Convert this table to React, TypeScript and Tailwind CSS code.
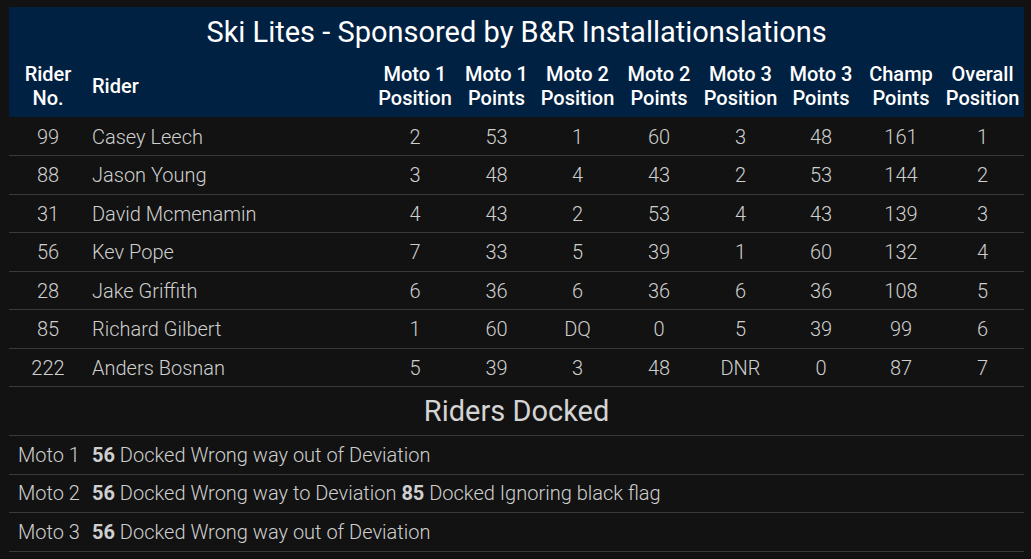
import React from 'react';

type Row = {
  no: string;
  name: string;
  m1p: string;
  m1pts: string;
  m2p: string;
  m2pts: string;
  m3p: string;
  m3pts: string;
  champ: string;
  overall: string;
};

const rows: Row[] = [
  { no: '99', name: 'Casey Leech', m1p: '2', m1pts: '53', m2p: '1', m2pts: '60', m3p: '3', m3pts: '48', champ: '161', overall: '1' },
  { no: '88', name: 'Jason Young', m1p: '3', m1pts: '48', m2p: '4', m2pts: '43', m3p: '2', m3pts: '53', champ: '144', overall: '2' },
  { no: '31', name: 'David Mcmenamin', m1p: '4', m1pts: '43', m2p: '2', m2pts: '53', m3p: '4', m3pts: '43', champ: '139', overall: '3' },
  { no: '56', name: 'Kev Pope', m1p: '7', m1pts: '33', m2p: '5', m2pts: '39', m3p: '1', m3pts: '60', champ: '132', overall: '4' },
  { no: '28', name: 'Jake Griffith', m1p: '6', m1pts: '36', m2p: '6', m2pts: '36', m3p: '6', m3pts: '36', champ: '108', overall: '5' },
  { no: '85', name: 'Richard Gilbert', m1p: '1', m1pts: '60', m2p: 'DQ', m2pts: '0', m3p: '5', m3pts: '39', champ: '99', overall: '6' },
  { no: '222', name: 'Anders Bosnan', m1p: '5', m1pts: '39', m2p: '3', m2pts: '48', m3p: 'DNR', m3pts: '0', champ: '87', overall: '7' },
];

const headers = [
  ['Moto 1', 'Position'],
  ['Moto 1', 'Points'],
  ['Moto 2', 'Position'],
  ['Moto 2', 'Points'],
  ['Moto 3', 'Position'],
  ['Moto 3', 'Points'],
  ['Champ', 'Points'],
  ['Overall', 'Position'],
];

const docked = [
  { moto: 'Moto 1', items: [{ no: '56', text: 'Docked Wrong way out of Deviation' }] },
  {
    moto: 'Moto 2',
    items: [
      { no: '56', text: 'Docked Wrong way to Deviation' },
      { no: '85', text: 'Docked Ignoring black flag' },
    ],
  },
  { moto: 'Moto 3', items: [{ no: '56', text: 'Docked Wrong way out of Deviation' }] },
];

export default function App() {
  return (
    <div className="min-h-[559px] bg-[#121212] pt-[7px] pl-[9px]" style={{ fontFamily: 'Roboto, "Liberation Sans", sans-serif' }}>
      <table className="w-[1015px] table-fixed border-collapse">
        <colgroup>
          <col className="w-[78px]" />
          <col className="w-[287px]" />
          <col className="w-[82px]" />
          <col className="w-[81px]" />
          <col className="w-[81px]" />
          <col className="w-[82px]" />
          <col className="w-[81px]" />
          <col className="w-[80px]" />
          <col className="w-[80px]" />
          <col className="w-[83px]" />
        </colgroup>
        <thead className="bg-[#012142] text-white">
          <tr>
            <th colSpan={10} className="h-[55px] pt-[8px] align-top text-center text-[29px] font-normal leading-[34px]">
              Ski Lites - Sponsored by B&amp;R Installationslations
            </th>
          </tr>
          <tr>
            <th className="pb-[7px] text-center text-[20px] font-medium leading-[24px]">
              Rider
              <br />
              No.
            </th>
            <th className="pb-[7px] pl-[5px] text-left text-[20px] font-medium leading-[24px]">Rider</th>
            {headers.map(([a, b], i) => (
              <th key={i} className="pb-[7px] text-center text-[20px] font-medium leading-[24px]">
                {a}
                <br />
                {b}
              </th>
            ))}
          </tr>
        </thead>
        <tbody className="text-[20px] font-light text-[#cfcfcf]">
          {rows.map((r) => (
            <tr key={r.no} className="h-[38.5px] border-b border-[#3a3a3a]">
              <td className="pt-[1px] text-center">{r.no}</td>
              <td className="pt-[1px] pl-[5px] text-left">{r.name}</td>
              <td className="pt-[1px] text-center">{r.m1p}</td>
              <td className="pt-[1px] text-center">{r.m1pts}</td>
              <td className="pt-[1px] text-center">{r.m2p}</td>
              <td className="pt-[1px] text-center">{r.m2pts}</td>
              <td className="pt-[1px] text-center">{r.m3p}</td>
              <td className="pt-[1px] text-center">{r.m3pts}</td>
              <td className="pt-[1px] text-center">{r.champ}</td>
              <td className="pt-[1px] text-center">{r.overall}</td>
            </tr>
          ))}
          <tr className="h-[49px] border-b border-[#3a3a3a]">
            <td colSpan={10} className="pt-[2px] text-center text-[29px] font-normal text-[#d4d4d4]">
              Riders Docked
            </td>
          </tr>
          {docked.map((d) => (
            <tr key={d.moto} className="h-[38.5px] border-b border-[#3a3a3a]">
              <td className="pl-[9px] text-left">{d.moto}</td>
              <td colSpan={9} className="pl-[5px] text-left">
                {d.items.map((it, i) => (
                  <span key={i}>
                    {i > 0 && ' '}
                    <span className="font-bold">{it.no}</span> {it.text}
                  </span>
                ))}
              </td>
            </tr>
          ))}
        </tbody>
      </table>
    </div>
  );
}
